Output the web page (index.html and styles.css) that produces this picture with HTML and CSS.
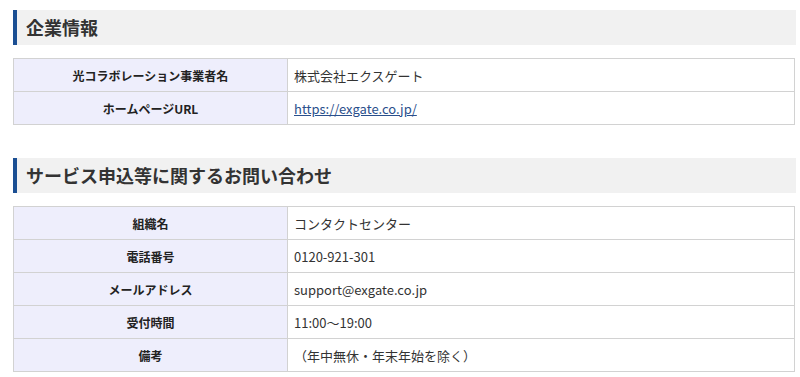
FILE: index.html
```html
<!DOCTYPE html>
<html lang="ja">
<head>
<meta charset="utf-8">
<link rel="stylesheet" href="styles.css">
</head>
<body>
<div class="page">
  <section class="block">
    <h2 class="heading">企業情報</h2>
    <table class="info">
      <tr><th>光コラボレーション事業者名</th><td>株式会社エクスゲート</td></tr>
      <tr><th>ホームページURL</th><td><a href="#">https://exgate.co.jp/</a></td></tr>
    </table>
  </section>
  <section class="block">
    <h2 class="heading">サービス申込等に関するお問い合わせ</h2>
    <table class="info">
      <tr><th>組織名</th><td>コンタクトセンター</td></tr>
      <tr><th>電話番号</th><td>0120-921-301</td></tr>
      <tr><th>メールアドレス</th><td>support@exgate.co.jp</td></tr>
      <tr><th>受付時間</th><td>11:00～19:00</td></tr>
      <tr><th>備考</th><td>（年中無休・年末年始を除く）</td></tr>
    </table>
  </section>
</div>
</body>
</html>
```

FILE: styles.css
```css
html, body {
  margin: 0;
  padding: 0;
  background: #fff;
}
body {
  font-family: "Noto Sans CJK JP", "Noto Sans", sans-serif;
  color: #333;
}
.page {
  width: 783px;
  margin-left: 13px;
  padding-top: 10px;
}
.block {
  margin-bottom: 33px;
}
.block:last-child {
  margin-bottom: 0;
}
.heading {
  margin: 0 0 13px 0;
  height: 35px;
  box-sizing: border-box;
  background: #f1f1f1;
  border-left: 4px solid #1b4f93;
  padding-left: 9px;
  font-size: 18px;
  font-weight: bold;
  line-height: 35px;
  color: #333;
}
.info {
  width: 782px;
  border-collapse: collapse;
  font-size: 13px;
}
.info th, .info td {
  border: 1px solid #d2d2d2;
  height: 33px;
  box-sizing: border-box;
  padding: 0 6px;
  vertical-align: middle;
}
.info th {
  width: 274px;
  background: #eeeefc;
  font-weight: bold;
  font-size: 12px;
  color: #222;
  text-align: center;
}
.info td {
  text-align: left;
  color: #333;
}
.info a {
  color: #2a4f8c;
  text-decoration: underline;
}
```
